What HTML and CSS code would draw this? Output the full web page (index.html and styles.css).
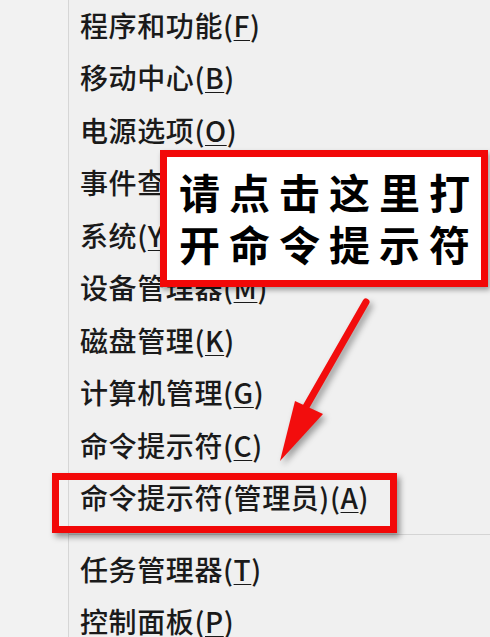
FILE: index.html
```html
<!DOCTYPE html>
<html>
  <head>
    <meta charset="UTF-8" />
    <meta name="viewport" content="width=device-width, initial-scale=1.0" />
    <title>Win+X 菜单</title>
    <link rel="stylesheet" href="styles.css">
  </head>
  <body>
    <div class="menu">
      <div class="gutter"></div>
      <ul class="items">
        <li class="item">程序和功能(<u>F</u>)</li>
        <li class="item">移动中心(<u>B</u>)</li>
        <li class="item">电源选项(<u>O</u>)</li>
        <li class="item">事件查看器(<u>V</u>)</li>
        <li class="item">系统(<u>Y</u>)</li>
        <li class="item">设备管理器(<u>M</u>)</li>
        <li class="item">磁盘管理(<u>K</u>)</li>
        <li class="item">计算机管理(<u>G</u>)</li>
        <li class="item">命令提示符(<u>C</u>)</li>
        <li class="item">命令提示符(管理员)(<u>A</u>)</li>
        <li class="sep"></li>
        <li class="item">任务管理器(<u>T</u>)</li>
        <li class="item">控制面板(<u>P</u>)</li>
      </ul>
    </div>

    <!-- annotation drawn over the menu -->
    <div class="callout">请点击这里打<br />开命令提示符</div>
    <div class="mark"></div>
    <svg class="arrow" width="490" height="637" viewBox="0 0 490 637">
      <line x1="366" y1="302" x2="303" y2="412" stroke="#f20d0d" stroke-width="7" stroke-linecap="round" />
      <polygon points="295,401 323,414 280,461" fill="#f20d0d" />
    </svg>
  </body>
</html>
```

FILE: styles.css
```css
body {
  margin: 0;
  background: #f0f0f0;
  font-family: "Noto Sans CJK SC", "Microsoft YaHei", sans-serif;
  overflow: hidden;
  width: 490px;
  height: 637px;
  position: relative;
}

.menu {
  display: flex;
  height: 637px;
}

.gutter {
  width: 68px;
  flex: none;
  background: #f2f2f2;
  border-right: 1px solid #d6d6d6;
}

.items {
  list-style: none;
  margin: 0;
  padding: 0;
  flex: 1;
}

.item {
  height: 52.5px;
  display: flex;
  align-items: center;
  padding-left: 11px;
  padding-bottom: 3px;
  box-sizing: border-box;
  font-size: 28px;
  font-weight: 500;
  letter-spacing: 0.6px;
  color: #1a1a1a;
  white-space: nowrap;
}

.item u {
  text-decoration-thickness: 1px;
  text-underline-offset: 3px;
}

.sep {
  height: 19px;
  display: flex;
  align-items: center;
}

.sep::before {
  content: "";
  display: block;
  width: 100%;
  height: 1px;
  background: #d4d4d4;
}

.callout {
  position: absolute;
  left: 160px;
  top: 150px;
  width: 302px;
  height: 115px;
  border: 7px solid #f20808;
  background: #fff;
  box-shadow: 2px 3px 5px rgba(0, 0, 0, 0.35);
  padding: 8px 0 0 12px;
  font-size: 41px;
  font-weight: 700;
  line-height: 52px;
  letter-spacing: 9px;
  color: #000;
  white-space: nowrap;
}

.mark {
  position: absolute;
  left: 52px;
  top: 473px;
  width: 331px;
  height: 46px;
  border: 7px solid #f20808;
  box-shadow: 3px 4px 6px rgba(0, 0, 0, 0.4);
}

.arrow {
  position: absolute;
  left: 0;
  top: 0;
  filter: drop-shadow(3px 4px 3px rgba(0, 0, 0, 0.35));
}
```
